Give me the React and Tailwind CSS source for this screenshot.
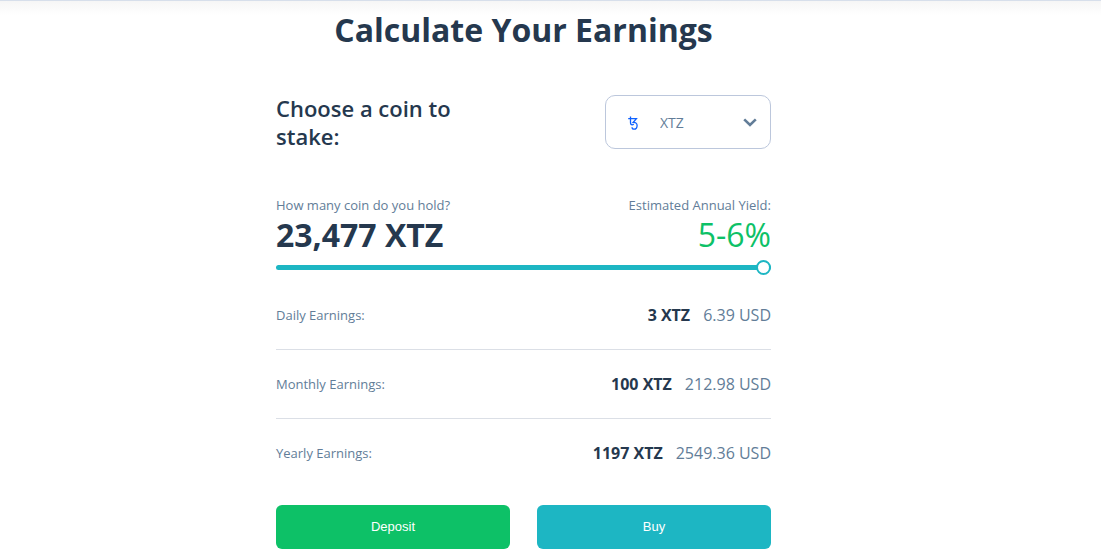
import { useState } from 'react';

const MAX_AMOUNT = 23477;

const EARNINGS = [
    { label: 'Daily Earnings:', coins: '3 XTZ', usd: '6.39 USD' },
    { label: 'Monthly Earnings:', coins: '100 XTZ', usd: '212.98 USD' },
    { label: 'Yearly Earnings:', coins: '1197 XTZ', usd: '2549.36 USD' }
];

function TezosIcon({ className }) {
    return (
        <svg viewBox="0 0 10 14" className={className} fill="none" stroke="currentColor" strokeWidth="1.3" aria-hidden="true">
            <path d="M0.2 2.7H8.4L5.3 6.3C7.7 6.1 9.1 7.6 9.1 9.6C9.1 11.8 7.9 13.2 6.2 13.2C4.9 13.2 4 12.5 4 11.3" />
            <path d="M2.5 0.4V6.6C2.5 8.1 3.1 8.8 4.1 8.8C4.8 8.8 5.3 8.5 5.6 7.9" />
        </svg>
    );
}

function ChevronIcon({ className }) {
    return (
        <svg viewBox="0 0 14 9" className={className} fill="none" stroke="currentColor" strokeWidth="2.6" aria-hidden="true">
            <path d="M1.2 1.4L7 7L12.8 1.4" />
        </svg>
    );
}

function CoinSelect() {
    return (
        <div className="relative w-[166px]">
            <TezosIcon className="absolute left-[23px] top-[21px] h-[14px] w-[10px] text-[#0f61ff] pointer-events-none" />
            <select
                id="coin"
                className="h-[54px] w-full appearance-none rounded-[10px] border border-[#bcc7dc] bg-transparent pt-[2px] pl-[54px] pr-10 text-sm text-[#627d98] outline-none"
            >
                <option>XTZ</option>
            </select>
            <ChevronIcon className="absolute right-[14px] top-[23px] h-[9px] w-[14px] text-[#627d98] pointer-events-none" />
        </div>
    );
}

export default function App() {
    const [amount, setAmount] = useState(MAX_AMOUNT);

    return (
        <div className="bg-white font-['Open_Sans',sans-serif] text-[#25384e]">
            <div className="border-t border-[#d7dfeb] bg-linear-to-b from-[#f6f6f6] to-white to-[14px] pr-[54px]">
                <main className="mx-auto max-w-[495px] pt-[9px] pb-1">
                    <h1 className="text-center text-[32px] leading-[40px] font-bold">Calculate Your Earnings</h1>

                    <div className="mt-11 flex items-start justify-between">
                        <label htmlFor="coin" className="w-[200px] text-[22px] leading-7 font-semibold">
                            Choose a coin to stake:
                        </label>
                        <div className="pt-px">
                            <CoinSelect />
                        </div>
                    </div>

                    <div className="mt-[45px] flex justify-between">
                        <div>
                            <label htmlFor="amount" className="block text-[13px] leading-5 text-[#627d98]">
                                How many coin do you hold?
                            </label>
                            <p className="text-[32px] leading-[40px] font-bold">{amount.toLocaleString('en-US')} XTZ</p>
                        </div>
                        <div className="text-right">
                            <p className="text-[13px] leading-5 text-[#627d98]">Estimated Annual Yield:</p>
                            <p className="text-[32px] leading-[40px] text-[#0dc167]">5-6%</p>
                        </div>
                    </div>

                    <input
                        id="amount"
                        type="range"
                        min="0"
                        max={MAX_AMOUNT}
                        value={amount}
                        onChange={(e) => setAmount(Number(e.target.value))}
                        className="mt-[5px] block h-[15px] w-full appearance-none bg-transparent outline-none [&::-webkit-slider-runnable-track]:h-[5px] [&::-webkit-slider-runnable-track]:rounded-full [&::-webkit-slider-runnable-track]:bg-[#1db6c3] [&::-webkit-slider-thumb]:-mt-[5px] [&::-webkit-slider-thumb]:size-[15px] [&::-webkit-slider-thumb]:appearance-none [&::-webkit-slider-thumb]:rounded-full [&::-webkit-slider-thumb]:border-2 [&::-webkit-slider-thumb]:border-[#1db6c3] [&::-webkit-slider-thumb]:bg-white"
                    />

                    <dl className="mt-[6px] divide-y divide-[#dbdfe6]">
                        {EARNINGS.map((row) => (
                            <div key={row.label} className="flex items-center justify-between py-[22px]">
                                <dt className="text-[13px] leading-6 text-[#627d98]">{row.label}</dt>
                                <dd className="flex gap-[13px] text-base">
                                    <span className="font-bold">{row.coins}</span>
                                    <span className="text-[#627d98]">{row.usd}</span>
                                </dd>
                            </div>
                        ))}
                    </dl>

                    <div className="mt-[18px] grid grid-cols-2 gap-[27px] font-['Liberation_Sans',sans-serif] text-[13px] text-white">
                        <button type="button" className="h-11 rounded-md bg-[#0dc167]">Deposit</button>
                        <button type="button" className="h-11 rounded-md bg-[#1db6c3]">Buy</button>
                    </div>
                </main>
            </div>
        </div>
    );
}
